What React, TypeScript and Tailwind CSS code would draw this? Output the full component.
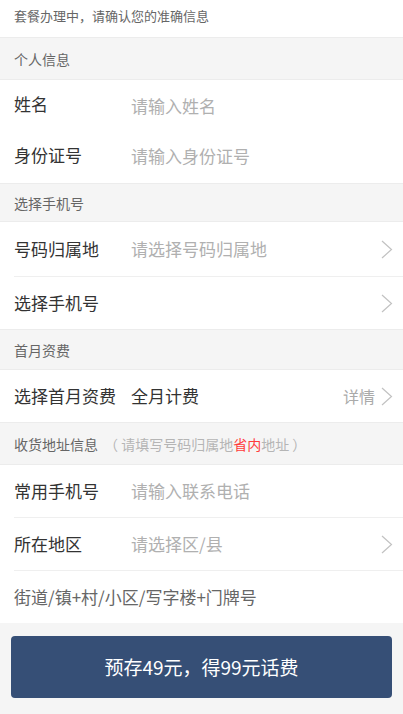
import React from "react";

const font = { fontFamily: '"Microsoft YaHei", "Noto Sans CJK SC", "Liberation Sans", sans-serif' };

function Chevron() {
  return (
    <svg width="12" height="19" viewBox="0 0 12 19" className="shrink-0">
      <path d="M1 1 L10.5 9.5 L1 18" fill="none" stroke="#c2c2c2" strokeWidth="1.2" />
    </svg>
  );
}

function Header({ children, h }: { children: React.ReactNode; h: string }) {
  return (
    <div className={`flex items-center bg-[#f5f5f5] border-y border-[#ececec] px-[14px] text-[14px] text-[#666] ${h}`}>
      {children}
    </div>
  );
}

function Row({
  label,
  value,
  placeholder = true,
  chevron = false,
  detail,
  divider = false,
  h,
}: {
  label: string;
  value?: string;
  placeholder?: boolean;
  chevron?: boolean;
  detail?: string;
  divider?: boolean;
  h: string;
}) {
  return (
    <div className="pl-[14px] bg-white">
      <div className={`flex items-center pr-[10px] ${h} ${divider ? "border-b border-[#efefef]" : ""}`}>
        <div className="w-[117px] shrink-0 text-[17px] text-[#333]">{label}</div>
        <div className={`flex-1 text-[17px] ${placeholder ? "text-[#b0b0b0]" : "text-[#333]"}`}>{value}</div>
        {detail && <span className="text-[16px] text-[#aaa] mr-[6px]">{detail}</span>}
        {chevron && <Chevron />}
      </div>
    </div>
  );
}

export default function App() {
  return (
    <div style={font} className="w-[403px] h-[714px] bg-[#f5f5f5] leading-[22px] overflow-hidden">
      <div className="h-[37px] bg-white px-[14px] pt-[5px] text-[13px] text-[#666]">
        套餐办理中，请确认您的准确信息
      </div>
      <Header h="h-[43px]">个人信息</Header>
      <div className="bg-white">
        <div className="h-[50px] pl-[14px] flex items-center pt-[2px]">
          <div className="w-[117px] shrink-0 text-[17px] text-[#333] -mt-[4px]">姓名</div>
          <div className="text-[17px] text-[#b0b0b0]">请输入姓名</div>
        </div>
        <div className="h-[53px] pl-[14px] flex items-center pb-[2px]">
          <div className="w-[117px] shrink-0 text-[17px] text-[#333] -mt-[2px]">身份证号</div>
          <div className="text-[17px] text-[#b0b0b0]">请输入身份证号</div>
        </div>
      </div>
      <Header h="h-[39px]">选择手机号</Header>
      <Row label="号码归属地" value="请选择号码归属地" chevron divider h="h-[55px]" />
      <Row label="选择手机号" chevron h="h-[52px]" />
      <Header h="h-[41px]">首月资费</Header>
      <Row label="选择首月资费" value="全月计费" placeholder={false} detail="详情" chevron h="h-[52px]" />
      <Header h="h-[43px]">
        <span>收货地址信息</span>
        <span className="text-[#b5b5b5] ml-[6px]">（ 请填写号码归属地<span className="text-[#ff3b3b]">省内</span>地址 ）</span>
      </Header>
      <Row label="常用手机号" value="请输入联系电话" divider h="h-[53px]" />
      <Row label="所在地区" value="请选择区/县" chevron divider h="h-[53px]" />
      <div className="bg-white pl-[14px] h-[52px] flex items-center text-[17px] text-[#666]">
        街道/镇+村/小区/写字楼+门牌号
      </div>
      <div className="px-[11px] pt-[13px]">
        <button className="w-full h-[62px] rounded-[4px] bg-[#364f76] text-white text-[19px] flex items-center justify-center">
          预存49元，得99元话费
        </button>
      </div>
    </div>
  );
}
